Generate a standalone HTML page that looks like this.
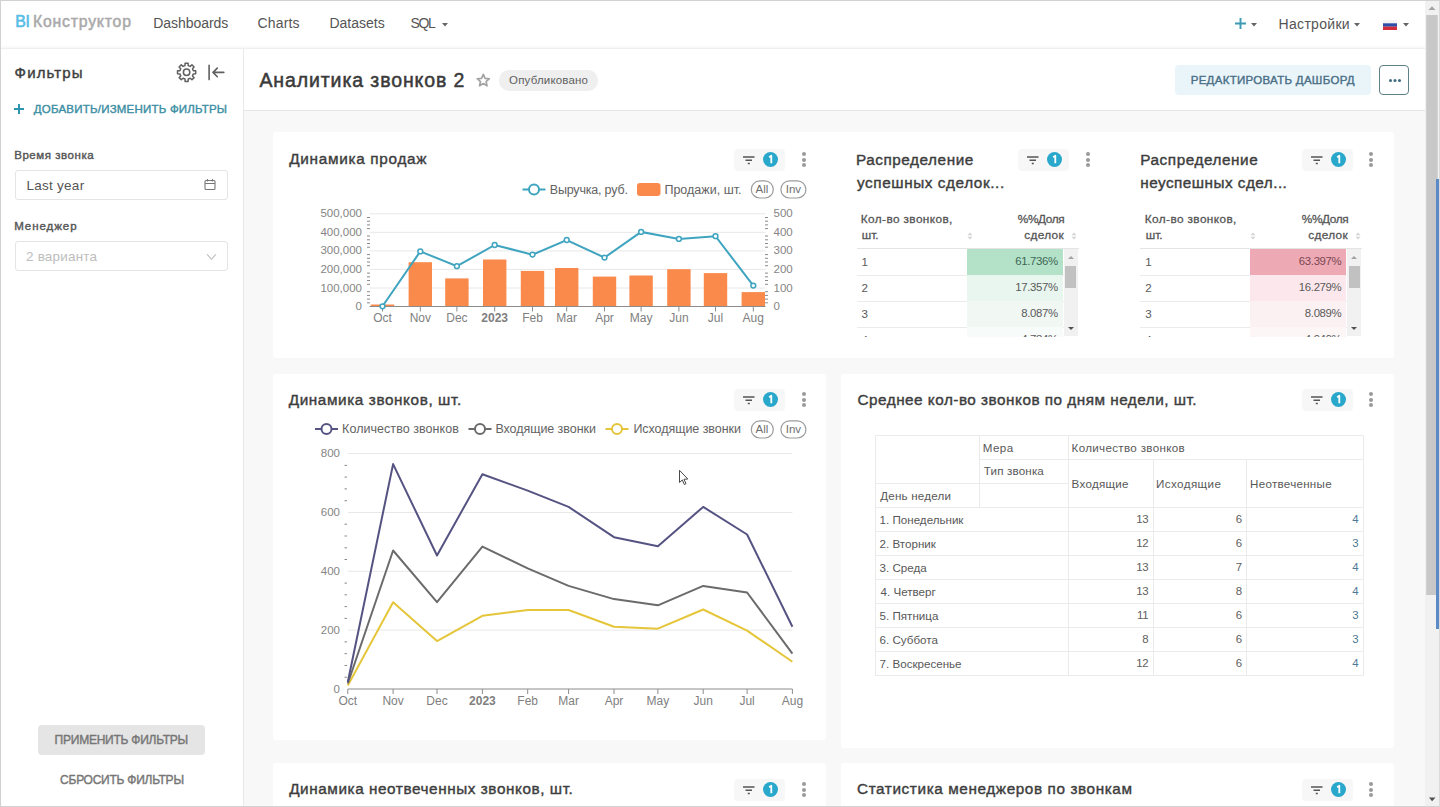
<!DOCTYPE html>
<html><head><meta charset="utf-8"><style>*{box-sizing:border-box;margin:0;padding:0}
html,body{width:1440px;height:807px;overflow:hidden;background:#fff;font-family:"Liberation Sans",sans-serif;color:#4a4a4a}
.a{position:absolute;white-space:nowrap}
.yl{font-size:11.5px;fill:#858585}
.xl{font-size:12px;fill:#808080}
.xl.b{font-weight:bold}
.lg{font-size:12.5px;fill:#636363}
.pl{font-size:11.5px;fill:#707070}
</style></head><body><div class="a" style="left:0px;top:0px;width:1425px;height:48px;background:#fff;"></div><div class="a" style="left:0px;top:45px;width:1425px;height:6px;background:linear-gradient(#fff,#f6f6f6 55%,#fafafa 80%,#fff);"></div><div class="a" style="left:0px;top:48px;width:1425px;height:1px;background:#efefef;"></div><div class="a" style="left:0px;top:49px;width:243px;height:758px;background:#fff;"></div><div class="a" style="left:243px;top:49px;width:1px;height:758px;background:#e9e9e9;"></div><div class="a" style="left:244px;top:49px;width:1181px;height:758px;background:#f8f8f8;"></div><div class="a" style="left:244px;top:49px;width:1181px;height:61px;background:#fff;"></div><div class="a" style="left:244px;top:110px;width:1181px;height:1px;background:#e6e6e6;"></div><div class="a" style="left:273px;top:132px;width:1121px;height:225.5px;background:#fff;border-radius:3px"></div><div class="a" style="left:273px;top:373.5px;width:553px;height:366.5px;background:#fff;border-radius:3px"></div><div class="a" style="left:841px;top:373.5px;width:553px;height:374.5px;background:#fff;border-radius:3px"></div><div class="a" style="left:273px;top:763px;width:553px;height:77px;background:#fff;border-radius:3px"></div><div class="a" style="left:841px;top:763px;width:553px;height:77px;background:#fff;border-radius:3px"></div><svg class="a" style="left:0;top:0" width="1440" height="807"><text x="362" y="310.0" text-anchor="end" class="yl">0</text><text x="773.5" y="310.0" class="yl">0</text><line x1="369.5" y1="288.0" x2="765.5" y2="288.0" stroke="#e8e8e8" stroke-width="1"/><text x="362" y="291.5" text-anchor="end" class="yl">100,000</text><text x="773.5" y="291.5" class="yl">100</text><line x1="369.5" y1="269.4" x2="765.5" y2="269.4" stroke="#e8e8e8" stroke-width="1"/><text x="362" y="272.9" text-anchor="end" class="yl">200,000</text><text x="773.5" y="272.9" class="yl">200</text><line x1="369.5" y1="250.9" x2="765.5" y2="250.9" stroke="#e8e8e8" stroke-width="1"/><text x="362" y="254.4" text-anchor="end" class="yl">300,000</text><text x="773.5" y="254.4" class="yl">300</text><line x1="369.5" y1="232.3" x2="765.5" y2="232.3" stroke="#e8e8e8" stroke-width="1"/><text x="362" y="235.8" text-anchor="end" class="yl">400,000</text><text x="773.5" y="235.8" class="yl">400</text><line x1="369.5" y1="213.8" x2="765.5" y2="213.8" stroke="#e8e8e8" stroke-width="1"/><text x="362" y="217.3" text-anchor="end" class="yl">500,000</text><text x="773.5" y="217.3" class="yl">500</text><line x1="367" y1="302.8" x2="370" y2="302.8" stroke="#8a8a8a" stroke-width="1"/><line x1="765" y1="302.8" x2="768" y2="302.8" stroke="#8a8a8a" stroke-width="1"/><line x1="367" y1="299.1" x2="370" y2="299.1" stroke="#8a8a8a" stroke-width="1"/><line x1="765" y1="299.1" x2="768" y2="299.1" stroke="#8a8a8a" stroke-width="1"/><line x1="367" y1="295.4" x2="370" y2="295.4" stroke="#8a8a8a" stroke-width="1"/><line x1="765" y1="295.4" x2="768" y2="295.4" stroke="#8a8a8a" stroke-width="1"/><line x1="367" y1="291.7" x2="370" y2="291.7" stroke="#8a8a8a" stroke-width="1"/><line x1="765" y1="291.7" x2="768" y2="291.7" stroke="#8a8a8a" stroke-width="1"/><line x1="367" y1="284.3" x2="370" y2="284.3" stroke="#8a8a8a" stroke-width="1"/><line x1="765" y1="284.3" x2="768" y2="284.3" stroke="#8a8a8a" stroke-width="1"/><line x1="367" y1="280.5" x2="370" y2="280.5" stroke="#8a8a8a" stroke-width="1"/><line x1="765" y1="280.5" x2="768" y2="280.5" stroke="#8a8a8a" stroke-width="1"/><line x1="367" y1="276.8" x2="370" y2="276.8" stroke="#8a8a8a" stroke-width="1"/><line x1="765" y1="276.8" x2="768" y2="276.8" stroke="#8a8a8a" stroke-width="1"/><line x1="367" y1="273.1" x2="370" y2="273.1" stroke="#8a8a8a" stroke-width="1"/><line x1="765" y1="273.1" x2="768" y2="273.1" stroke="#8a8a8a" stroke-width="1"/><line x1="367" y1="265.7" x2="370" y2="265.7" stroke="#8a8a8a" stroke-width="1"/><line x1="765" y1="265.7" x2="768" y2="265.7" stroke="#8a8a8a" stroke-width="1"/><line x1="367" y1="262.0" x2="370" y2="262.0" stroke="#8a8a8a" stroke-width="1"/><line x1="765" y1="262.0" x2="768" y2="262.0" stroke="#8a8a8a" stroke-width="1"/><line x1="367" y1="258.3" x2="370" y2="258.3" stroke="#8a8a8a" stroke-width="1"/><line x1="765" y1="258.3" x2="768" y2="258.3" stroke="#8a8a8a" stroke-width="1"/><line x1="367" y1="254.6" x2="370" y2="254.6" stroke="#8a8a8a" stroke-width="1"/><line x1="765" y1="254.6" x2="768" y2="254.6" stroke="#8a8a8a" stroke-width="1"/><line x1="367" y1="247.2" x2="370" y2="247.2" stroke="#8a8a8a" stroke-width="1"/><line x1="765" y1="247.2" x2="768" y2="247.2" stroke="#8a8a8a" stroke-width="1"/><line x1="367" y1="243.5" x2="370" y2="243.5" stroke="#8a8a8a" stroke-width="1"/><line x1="765" y1="243.5" x2="768" y2="243.5" stroke="#8a8a8a" stroke-width="1"/><line x1="367" y1="239.8" x2="370" y2="239.8" stroke="#8a8a8a" stroke-width="1"/><line x1="765" y1="239.8" x2="768" y2="239.8" stroke="#8a8a8a" stroke-width="1"/><line x1="367" y1="236.0" x2="370" y2="236.0" stroke="#8a8a8a" stroke-width="1"/><line x1="765" y1="236.0" x2="768" y2="236.0" stroke="#8a8a8a" stroke-width="1"/><line x1="367" y1="228.6" x2="370" y2="228.6" stroke="#8a8a8a" stroke-width="1"/><line x1="765" y1="228.6" x2="768" y2="228.6" stroke="#8a8a8a" stroke-width="1"/><line x1="367" y1="224.9" x2="370" y2="224.9" stroke="#8a8a8a" stroke-width="1"/><line x1="765" y1="224.9" x2="768" y2="224.9" stroke="#8a8a8a" stroke-width="1"/><line x1="367" y1="221.2" x2="370" y2="221.2" stroke="#8a8a8a" stroke-width="1"/><line x1="765" y1="221.2" x2="768" y2="221.2" stroke="#8a8a8a" stroke-width="1"/><line x1="367" y1="217.5" x2="370" y2="217.5" stroke="#8a8a8a" stroke-width="1"/><line x1="765" y1="217.5" x2="768" y2="217.5" stroke="#8a8a8a" stroke-width="1"/><rect x="370.8" y="304.5" width="23.4" height="2.0" fill="#fa8a4b"/><rect x="408.6" y="262.2" width="23.4" height="44.3" fill="#fa8a4b"/><rect x="445.2" y="278.4" width="23.4" height="28.1" fill="#fa8a4b"/><rect x="483.0" y="259.5" width="23.4" height="47.0" fill="#fa8a4b"/><rect x="520.8" y="270.9" width="23.4" height="35.6" fill="#fa8a4b"/><rect x="555.0" y="268" width="23.4" height="38.5" fill="#fa8a4b"/><rect x="592.8" y="276.6" width="23.4" height="29.9" fill="#fa8a4b"/><rect x="629.4" y="275.5" width="23.4" height="31.0" fill="#fa8a4b"/><rect x="667.2" y="269.2" width="23.4" height="37.3" fill="#fa8a4b"/><rect x="703.8" y="273.1" width="23.4" height="33.4" fill="#fa8a4b"/><rect x="741.6" y="292.1" width="23.4" height="14.4" fill="#fa8a4b"/><line x1="369.5" y1="306.5" x2="765.5" y2="306.5" stroke="#8c8c8c" stroke-width="1"/><line x1="382.5" y1="306.5" x2="382.5" y2="311.5" stroke="#8c8c8c" stroke-width="1"/><text x="382.5" y="322" text-anchor="middle" class="xl">Oct</text><line x1="420.3" y1="306.5" x2="420.3" y2="311.5" stroke="#8c8c8c" stroke-width="1"/><text x="420.3" y="322" text-anchor="middle" class="xl">Nov</text><line x1="456.9" y1="306.5" x2="456.9" y2="311.5" stroke="#8c8c8c" stroke-width="1"/><text x="456.9" y="322" text-anchor="middle" class="xl">Dec</text><line x1="494.7" y1="306.5" x2="494.7" y2="311.5" stroke="#8c8c8c" stroke-width="1"/><text x="494.7" y="322" text-anchor="middle" class="xl b">2023</text><line x1="532.5" y1="306.5" x2="532.5" y2="311.5" stroke="#8c8c8c" stroke-width="1"/><text x="532.5" y="322" text-anchor="middle" class="xl">Feb</text><line x1="566.7" y1="306.5" x2="566.7" y2="311.5" stroke="#8c8c8c" stroke-width="1"/><text x="566.7" y="322" text-anchor="middle" class="xl">Mar</text><line x1="604.5" y1="306.5" x2="604.5" y2="311.5" stroke="#8c8c8c" stroke-width="1"/><text x="604.5" y="322" text-anchor="middle" class="xl">Apr</text><line x1="641.1" y1="306.5" x2="641.1" y2="311.5" stroke="#8c8c8c" stroke-width="1"/><text x="641.1" y="322" text-anchor="middle" class="xl">May</text><line x1="678.9" y1="306.5" x2="678.9" y2="311.5" stroke="#8c8c8c" stroke-width="1"/><text x="678.9" y="322" text-anchor="middle" class="xl">Jun</text><line x1="715.5" y1="306.5" x2="715.5" y2="311.5" stroke="#8c8c8c" stroke-width="1"/><text x="715.5" y="322" text-anchor="middle" class="xl">Jul</text><line x1="753.3" y1="306.5" x2="753.3" y2="311.5" stroke="#8c8c8c" stroke-width="1"/><text x="753.3" y="322" text-anchor="middle" class="xl">Aug</text><polyline points="382.5,306.3 420.3,251.4 456.9,266.2 494.7,245 532.5,254.6 566.7,240 604.5,257.6 641.1,231.9 678.9,238.9 715.5,236.2 753.3,285.6" fill="none" stroke="#3ea4bf" stroke-width="2"/><circle cx="382.5" cy="306.3" r="2.4" fill="#fff" stroke="#3ea4bf" stroke-width="1.5"/><circle cx="420.3" cy="251.4" r="2.4" fill="#fff" stroke="#3ea4bf" stroke-width="1.5"/><circle cx="456.9" cy="266.2" r="2.4" fill="#fff" stroke="#3ea4bf" stroke-width="1.5"/><circle cx="494.7" cy="245" r="2.4" fill="#fff" stroke="#3ea4bf" stroke-width="1.5"/><circle cx="532.5" cy="254.6" r="2.4" fill="#fff" stroke="#3ea4bf" stroke-width="1.5"/><circle cx="566.7" cy="240" r="2.4" fill="#fff" stroke="#3ea4bf" stroke-width="1.5"/><circle cx="604.5" cy="257.6" r="2.4" fill="#fff" stroke="#3ea4bf" stroke-width="1.5"/><circle cx="641.1" cy="231.9" r="2.4" fill="#fff" stroke="#3ea4bf" stroke-width="1.5"/><circle cx="678.9" cy="238.9" r="2.4" fill="#fff" stroke="#3ea4bf" stroke-width="1.5"/><circle cx="715.5" cy="236.2" r="2.4" fill="#fff" stroke="#3ea4bf" stroke-width="1.5"/><circle cx="753.3" cy="285.6" r="2.4" fill="#fff" stroke="#3ea4bf" stroke-width="1.5"/><line x1="522.5" y1="189.5" x2="545.5" y2="189.5" stroke="#3ea4bf" stroke-width="2"/><circle cx="534" cy="189.5" r="5" fill="#fff" stroke="#3ea4bf" stroke-width="2"/><rect x="637" y="183" width="23.5" height="13" rx="3" fill="#fa8a4b"/><rect x="751.3" y="180.8" width="22" height="17.2" rx="8.6" fill="none" stroke="#9c9c9c" stroke-width="1.2"/><text x="762" y="193" text-anchor="middle" class="pl">All</text><rect x="780.9" y="180.8" width="25" height="17.2" rx="8.6" fill="none" stroke="#9c9c9c" stroke-width="1.2"/><text x="793.4" y="193" text-anchor="middle" class="pl">Inv</text></svg><svg class="a" style="left:0;top:0" width="1440" height="807"><text x="340" y="692.5" text-anchor="end" class="yl">0</text><line x1="347.8" y1="630.1" x2="792.4" y2="630.1" stroke="#e8e8e8" stroke-width="1"/><text x="340" y="633.6" text-anchor="end" class="yl">200</text><line x1="347.8" y1="571.3" x2="792.4" y2="571.3" stroke="#e8e8e8" stroke-width="1"/><text x="340" y="574.8" text-anchor="end" class="yl">400</text><line x1="347.8" y1="512.5" x2="792.4" y2="512.5" stroke="#e8e8e8" stroke-width="1"/><text x="340" y="516.0" text-anchor="end" class="yl">600</text><line x1="347.8" y1="453.6" x2="792.4" y2="453.6" stroke="#e8e8e8" stroke-width="1"/><text x="340" y="457.1" text-anchor="end" class="yl">800</text><line x1="344.5" y1="677.2" x2="347" y2="677.2" stroke="#8a8a8a" stroke-width="1"/><line x1="344.5" y1="665.5" x2="347" y2="665.5" stroke="#8a8a8a" stroke-width="1"/><line x1="344.5" y1="653.7" x2="347" y2="653.7" stroke="#8a8a8a" stroke-width="1"/><line x1="344.5" y1="641.9" x2="347" y2="641.9" stroke="#8a8a8a" stroke-width="1"/><line x1="344.5" y1="618.4" x2="347" y2="618.4" stroke="#8a8a8a" stroke-width="1"/><line x1="344.5" y1="606.6" x2="347" y2="606.6" stroke="#8a8a8a" stroke-width="1"/><line x1="344.5" y1="594.8" x2="347" y2="594.8" stroke="#8a8a8a" stroke-width="1"/><line x1="344.5" y1="583.1" x2="347" y2="583.1" stroke="#8a8a8a" stroke-width="1"/><line x1="344.5" y1="559.5" x2="347" y2="559.5" stroke="#8a8a8a" stroke-width="1"/><line x1="344.5" y1="547.8" x2="347" y2="547.8" stroke="#8a8a8a" stroke-width="1"/><line x1="344.5" y1="536.0" x2="347" y2="536.0" stroke="#8a8a8a" stroke-width="1"/><line x1="344.5" y1="524.2" x2="347" y2="524.2" stroke="#8a8a8a" stroke-width="1"/><line x1="344.5" y1="500.7" x2="347" y2="500.7" stroke="#8a8a8a" stroke-width="1"/><line x1="344.5" y1="488.9" x2="347" y2="488.9" stroke="#8a8a8a" stroke-width="1"/><line x1="344.5" y1="477.1" x2="347" y2="477.1" stroke="#8a8a8a" stroke-width="1"/><line x1="344.5" y1="465.4" x2="347" y2="465.4" stroke="#8a8a8a" stroke-width="1"/><line x1="347.8" y1="689" x2="792.4" y2="689" stroke="#8c8c8c" stroke-width="1"/><line x1="347.8" y1="689" x2="347.8" y2="694" stroke="#8c8c8c" stroke-width="1"/><text x="347.8" y="705" text-anchor="middle" class="xl">Oct</text><line x1="393.1" y1="689" x2="393.1" y2="694" stroke="#8c8c8c" stroke-width="1"/><text x="393.1" y="705" text-anchor="middle" class="xl">Nov</text><line x1="437.0" y1="689" x2="437.0" y2="694" stroke="#8c8c8c" stroke-width="1"/><text x="437.0" y="705" text-anchor="middle" class="xl">Dec</text><line x1="482.4" y1="689" x2="482.4" y2="694" stroke="#8c8c8c" stroke-width="1"/><text x="482.4" y="705" text-anchor="middle" class="xl b">2023</text><line x1="527.7" y1="689" x2="527.7" y2="694" stroke="#8c8c8c" stroke-width="1"/><text x="527.7" y="705" text-anchor="middle" class="xl">Feb</text><line x1="568.6" y1="689" x2="568.6" y2="694" stroke="#8c8c8c" stroke-width="1"/><text x="568.6" y="705" text-anchor="middle" class="xl">Mar</text><line x1="614.0" y1="689" x2="614.0" y2="694" stroke="#8c8c8c" stroke-width="1"/><text x="614.0" y="705" text-anchor="middle" class="xl">Apr</text><line x1="657.9" y1="689" x2="657.9" y2="694" stroke="#8c8c8c" stroke-width="1"/><text x="657.9" y="705" text-anchor="middle" class="xl">May</text><line x1="703.2" y1="689" x2="703.2" y2="694" stroke="#8c8c8c" stroke-width="1"/><text x="703.2" y="705" text-anchor="middle" class="xl">Jun</text><line x1="747.1" y1="689" x2="747.1" y2="694" stroke="#8c8c8c" stroke-width="1"/><text x="747.1" y="705" text-anchor="middle" class="xl">Jul</text><line x1="792.4" y1="689" x2="792.4" y2="694" stroke="#8c8c8c" stroke-width="1"/><text x="792.4" y="705" text-anchor="middle" class="xl">Aug</text><polyline points="347.8,685.5 393.1,602.2 437.0,641.1 482.4,615.8 527.7,610 568.6,610 614.0,626.7 657.9,628.7 703.2,609.5 747.1,630.6 792.4,661.7" fill="none" stroke="#e5c63a" stroke-width="2" stroke-linejoin="round"/><polyline points="347.8,683.5 393.1,550.5 437.0,602.2 482.4,546.6 527.7,568.4 568.6,585.9 614.0,599.1 657.9,605.3 703.2,585.9 747.1,592.5 792.4,653.6" fill="none" stroke="#6b6b6b" stroke-width="2" stroke-linejoin="round"/><polyline points="347.8,682 393.1,464.1 437.0,555.5 482.4,474.2 527.7,490.6 568.6,506.9 614.0,537.2 657.9,546.2 703.2,506.9 747.1,534.5 792.4,626.7" fill="none" stroke="#555382" stroke-width="2" stroke-linejoin="round"/><line x1="315" y1="429" x2="338" y2="429" stroke="#555382" stroke-width="2"/><circle cx="326.5" cy="429" r="5" fill="#fff" stroke="#555382" stroke-width="2"/><line x1="468.5" y1="429" x2="491.5" y2="429" stroke="#6b6b6b" stroke-width="2"/><circle cx="480.0" cy="429" r="5" fill="#fff" stroke="#6b6b6b" stroke-width="2"/><line x1="605.5" y1="429" x2="628.5" y2="429" stroke="#e5c63a" stroke-width="2"/><circle cx="617.0" cy="429" r="5" fill="#fff" stroke="#e5c63a" stroke-width="2"/><rect x="751.3" y="420.8" width="22" height="17.2" rx="8.6" fill="none" stroke="#9c9c9c" stroke-width="1.2"/><text x="762" y="433" text-anchor="middle" class="pl">All</text><rect x="780.9" y="420.8" width="25" height="17.2" rx="8.6" fill="none" stroke="#9c9c9c" stroke-width="1.2"/><text x="793.4" y="433" text-anchor="middle" class="pl">Inv</text><path d="M679.5 470.3 L679.5 482.5 L682.3 479.9 L684.3 484.5 L686 483.7 L684 479.3 L687.8 479 Z" fill="#fff" stroke="#4a4a4a" stroke-width="1" stroke-linejoin="round"/></svg><div class="a" style="left:856.5px;top:205px;width:230px;height:131.5px;overflow:hidden"><svg class="a" style="left:110.0px;top:27px" width="6" height="8" viewBox="0 0 6 8"><path d="M0.5 3.2L3 0.6 5.5 3.2z M0.5 4.8L3 7.4 5.5 4.8z" fill="#d4d4d4"/></svg><svg class="a" style="left:214.5px;top:27px" width="6" height="8" viewBox="0 0 6 8"><path d="M0.5 3.2L3 0.6 5.5 3.2z M0.5 4.8L3 7.4 5.5 4.8z" fill="#d4d4d4"/></svg><div class="a" style="left:0.00px;top:42.50px;width:222px;height:1.5px;background:#e4e4e4"></div><div class="a" style="left:110.30px;top:43.50px;width:96px;height:26.5px;background:#b3e2c9"></div><div class="a" style="left:5.0px;top:49.5px;font-size:11.6px;line-height:13px;color:#5a5a5a">1</div><div class="a" style="left:110.30px;top:49.5px;width:90.9px;text-align:right;font-size:11.4px;letter-spacing:-0.35px;line-height:13px;color:#3f6753">61.736%</div><div class="a" style="left:0.00px;top:69.50px;width:207px;height:1px;background:#ebebeb"></div><div class="a" style="left:110.30px;top:70.00px;width:96px;height:26px;background:#e9f6ef"></div><div class="a" style="left:5.0px;top:75.5px;font-size:11.6px;line-height:13px;color:#5a5a5a">2</div><div class="a" style="left:110.30px;top:75.5px;width:90.9px;text-align:right;font-size:11.4px;letter-spacing:-0.35px;line-height:13px;color:#5a5a5a">17.357%</div><div class="a" style="left:0.00px;top:95.50px;width:207px;height:1px;background:#ebebeb"></div><div class="a" style="left:110.30px;top:96.00px;width:96px;height:26px;background:#f1f8f4"></div><div class="a" style="left:5.0px;top:101.5px;font-size:11.6px;line-height:13px;color:#5a5a5a">3</div><div class="a" style="left:110.30px;top:101.5px;width:90.9px;text-align:right;font-size:11.4px;letter-spacing:-0.35px;line-height:13px;color:#5a5a5a">8.087%</div><div class="a" style="left:0.00px;top:121.50px;width:207px;height:1px;background:#ebebeb"></div><div class="a" style="left:110.30px;top:122.00px;width:96px;height:26px;background:#f7fbf9"></div><div class="a" style="left:5.0px;top:127.5px;font-size:11.6px;line-height:13px;color:#5a5a5a">4</div><div class="a" style="left:110.30px;top:127.5px;width:90.9px;text-align:right;font-size:11.4px;letter-spacing:-0.35px;line-height:13px;color:#5a5a5a">4.784%</div><div class="a" style="left:0.00px;top:147.50px;width:207px;height:1px;background:#ebebeb"></div><div class="a" style="left:207.00px;top:44.00px;width:14px;height:87px;background:#f1f1f1"></div><div class="a" style="left:208.50px;top:61.00px;width:11px;height:22px;background:#c1c1c1"></div><svg class="a" style="left:208.0px;top:48px" width="12" height="78" viewBox="0 0 12 78"><path d="M3 6L6 3 9 6z" fill="#a3a3a3"/><path d="M3 74L6 77 9 74z" fill="#505050"/></svg></div><div class="a" style="left:1140.2px;top:205px;width:230px;height:131.5px;overflow:hidden"><svg class="a" style="left:110.0px;top:27px" width="6" height="8" viewBox="0 0 6 8"><path d="M0.5 3.2L3 0.6 5.5 3.2z M0.5 4.8L3 7.4 5.5 4.8z" fill="#d4d4d4"/></svg><svg class="a" style="left:214.5px;top:27px" width="6" height="8" viewBox="0 0 6 8"><path d="M0.5 3.2L3 0.6 5.5 3.2z M0.5 4.8L3 7.4 5.5 4.8z" fill="#d4d4d4"/></svg><div class="a" style="left:0.00px;top:42.50px;width:222px;height:1.5px;background:#e4e4e4"></div><div class="a" style="left:110.30px;top:43.50px;width:96px;height:26.5px;background:#eeaab4"></div><div class="a" style="left:5.0px;top:49.5px;font-size:11.6px;line-height:13px;color:#5a5a5a">1</div><div class="a" style="left:110.30px;top:49.5px;width:90.9px;text-align:right;font-size:11.4px;letter-spacing:-0.35px;line-height:13px;color:#7a4753">63.397%</div><div class="a" style="left:0.00px;top:69.50px;width:207px;height:1px;background:#ebebeb"></div><div class="a" style="left:110.30px;top:70.00px;width:96px;height:26px;background:#fce8ec"></div><div class="a" style="left:5.0px;top:75.5px;font-size:11.6px;line-height:13px;color:#5a5a5a">2</div><div class="a" style="left:110.30px;top:75.5px;width:90.9px;text-align:right;font-size:11.4px;letter-spacing:-0.35px;line-height:13px;color:#5a5a5a">16.279%</div><div class="a" style="left:0.00px;top:95.50px;width:207px;height:1px;background:#ebebeb"></div><div class="a" style="left:110.30px;top:96.00px;width:96px;height:26px;background:#fbf1f3"></div><div class="a" style="left:5.0px;top:101.5px;font-size:11.6px;line-height:13px;color:#5a5a5a">3</div><div class="a" style="left:110.30px;top:101.5px;width:90.9px;text-align:right;font-size:11.4px;letter-spacing:-0.35px;line-height:13px;color:#5a5a5a">8.089%</div><div class="a" style="left:0.00px;top:121.50px;width:207px;height:1px;background:#ebebeb"></div><div class="a" style="left:110.30px;top:122.00px;width:96px;height:26px;background:#fcf6f7"></div><div class="a" style="left:5.0px;top:127.5px;font-size:11.6px;line-height:13px;color:#5a5a5a">4</div><div class="a" style="left:110.30px;top:127.5px;width:90.9px;text-align:right;font-size:11.4px;letter-spacing:-0.35px;line-height:13px;color:#5a5a5a">4.940%</div><div class="a" style="left:0.00px;top:147.50px;width:207px;height:1px;background:#ebebeb"></div><div class="a" style="left:207.00px;top:44.00px;width:14px;height:87px;background:#f1f1f1"></div><div class="a" style="left:208.50px;top:61.00px;width:11px;height:22px;background:#c1c1c1"></div><svg class="a" style="left:208.0px;top:48px" width="12" height="78" viewBox="0 0 12 78"><path d="M3 6L6 3 9 6z" fill="#a3a3a3"/><path d="M3 74L6 77 9 74z" fill="#505050"/></svg></div><svg class="a" style="left:0;top:0" width="1440" height="807"><line x1="875.5" y1="435.5" x2="1363.5" y2="435.5" stroke="#ebebeb" stroke-width="1"/><line x1="875.5" y1="675.5" x2="1363.5" y2="675.5" stroke="#ebebeb" stroke-width="1"/><line x1="875.5" y1="435.5" x2="875.5" y2="675.5" stroke="#ebebeb" stroke-width="1"/><line x1="1363.5" y1="435.5" x2="1363.5" y2="675.5" stroke="#ebebeb" stroke-width="1"/><line x1="979.5" y1="435.5" x2="979.5" y2="507.5" stroke="#ebebeb" stroke-width="1"/><line x1="1068.5" y1="435.5" x2="1068.5" y2="675.5" stroke="#ebebeb" stroke-width="1"/><line x1="1153.5" y1="459.5" x2="1153.5" y2="675.5" stroke="#ebebeb" stroke-width="1"/><line x1="1246.5" y1="459.5" x2="1246.5" y2="675.5" stroke="#ebebeb" stroke-width="1"/><line x1="979.5" y1="459.5" x2="1363.5" y2="459.5" stroke="#ebebeb" stroke-width="1"/><line x1="875.5" y1="483.5" x2="1068.5" y2="483.5" stroke="#ebebeb" stroke-width="1"/><line x1="875.5" y1="507.5" x2="1363.5" y2="507.5" stroke="#ebebeb" stroke-width="1"/><line x1="875.5" y1="531.5" x2="1363.5" y2="531.5" stroke="#ebebeb" stroke-width="1"/><line x1="875.5" y1="555.5" x2="1363.5" y2="555.5" stroke="#ebebeb" stroke-width="1"/><line x1="875.5" y1="579.5" x2="1363.5" y2="579.5" stroke="#ebebeb" stroke-width="1"/><line x1="875.5" y1="603.5" x2="1363.5" y2="603.5" stroke="#ebebeb" stroke-width="1"/><line x1="875.5" y1="627.5" x2="1363.5" y2="627.5" stroke="#ebebeb" stroke-width="1"/><line x1="875.5" y1="651.5" x2="1363.5" y2="651.5" stroke="#ebebeb" stroke-width="1"/><text x="1148.5" y="523.1" text-anchor="end" style="font-size:11.4px;fill:#606060;letter-spacing:-0.2px">13</text><text x="1242" y="523.1" text-anchor="end" style="font-size:11.4px;fill:#606060">6</text><text x="1358.5" y="523.1" text-anchor="end" style="font-size:11.4px;fill:#4d7896">4</text><text x="1148.5" y="547.1" text-anchor="end" style="font-size:11.4px;fill:#606060;letter-spacing:-0.2px">12</text><text x="1242" y="547.1" text-anchor="end" style="font-size:11.4px;fill:#606060">6</text><text x="1358.5" y="547.1" text-anchor="end" style="font-size:11.4px;fill:#4d7896">3</text><text x="1148.5" y="571.1" text-anchor="end" style="font-size:11.4px;fill:#606060;letter-spacing:-0.2px">13</text><text x="1242" y="571.1" text-anchor="end" style="font-size:11.4px;fill:#606060">7</text><text x="1358.5" y="571.1" text-anchor="end" style="font-size:11.4px;fill:#4d7896">4</text><text x="1148.5" y="595.1" text-anchor="end" style="font-size:11.4px;fill:#606060;letter-spacing:-0.2px">13</text><text x="1242" y="595.1" text-anchor="end" style="font-size:11.4px;fill:#606060">8</text><text x="1358.5" y="595.1" text-anchor="end" style="font-size:11.4px;fill:#4d7896">4</text><text x="1148.5" y="619.1" text-anchor="end" style="font-size:11.4px;fill:#606060;letter-spacing:-0.2px">11</text><text x="1242" y="619.1" text-anchor="end" style="font-size:11.4px;fill:#606060">6</text><text x="1358.5" y="619.1" text-anchor="end" style="font-size:11.4px;fill:#4d7896">3</text><text x="1148.5" y="643.1" text-anchor="end" style="font-size:11.4px;fill:#606060;letter-spacing:-0.2px">8</text><text x="1242" y="643.1" text-anchor="end" style="font-size:11.4px;fill:#606060">6</text><text x="1358.5" y="643.1" text-anchor="end" style="font-size:11.4px;fill:#4d7896">3</text><text x="1148.5" y="667.1" text-anchor="end" style="font-size:11.4px;fill:#606060;letter-spacing:-0.2px">12</text><text x="1242" y="667.1" text-anchor="end" style="font-size:11.4px;fill:#606060">6</text><text x="1358.5" y="667.1" text-anchor="end" style="font-size:11.4px;fill:#4d7896">4</text></svg><svg class="a" style="left:441.5px;top:22.5px" width="6" height="4" viewBox="0 0 6 4"><path d="M0 0h6L3 3.6z" fill="#666"/></svg><svg class="a" style="left:1234.5px;top:18px" width="11" height="11" viewBox="0 0 11 11"><path d="M5.5 0v11M0 5.5h11" stroke="#3c9ab4" stroke-width="1.9"/></svg><svg class="a" style="left:1250.5px;top:22.5px" width="6" height="4" viewBox="0 0 6 4"><path d="M0 0h6L3 3.6z" fill="#666"/></svg><svg class="a" style="left:1354px;top:22.5px" width="6" height="4" viewBox="0 0 6 4"><path d="M0 0h6L3 3.6z" fill="#666"/></svg><svg class="a" style="left:1383px;top:20px" width="14" height="10" viewBox="0 0 14 10"><rect width="14" height="3.4" fill="#f4f4f4"/><rect y="3.3" width="14" height="3.4" fill="#2c4ea8"/><rect y="6.6" width="14" height="3.4" fill="#d22b3a"/></svg><svg class="a" style="left:1402.5px;top:22.5px" width="6" height="4" viewBox="0 0 6 4"><path d="M0 0h6L3 3.6z" fill="#666"/></svg><svg class="a" style="left:0;top:0" width="240" height="100"><path d="M193.31 70.69 L195.68 70.79 L195.68 73.81 L193.31 73.91 L192.48 75.91 L194.09 77.65 L191.95 79.79 L190.21 78.18 L188.21 79.01 L188.11 81.38 L185.09 81.38 L184.99 79.01 L182.99 78.18 L181.25 79.79 L179.11 77.65 L180.72 75.91 L179.89 73.91 L177.52 73.81 L177.52 70.79 L179.89 70.69 L180.72 68.69 L179.11 66.95 L181.25 64.81 L182.99 66.42 L184.99 65.59 L185.09 63.22 L188.11 63.22 L188.21 65.59 L190.21 66.42 L191.95 64.81 L194.09 66.95 L192.48 68.69Z" fill="none" stroke="#606060" stroke-width="1.5" stroke-linejoin="round"/><circle cx="186.6" cy="72.3" r="3.2" fill="none" stroke="#606060" stroke-width="1.5"/><path d="M209.1 65.3v14.3M213 72.4h10.8M217.3 68.1l-4.3 4.3 4.3 4.3" fill="none" stroke="#606060" stroke-width="1.6" stroke-linecap="round" stroke-linejoin="round"/></svg><svg class="a" style="left:14px;top:103.5px" width="10" height="10" viewBox="0 0 10 10"><path d="M5 0v10M0 5h10" stroke="#2d95b0" stroke-width="2"/></svg><div class="a" style="left:15px;top:170px;width:213px;height:30px;border:1px solid #e4e4e4;border-radius:3px"></div><svg class="a" style="left:204px;top:179px" width="12" height="11" viewBox="0 0 12 11" fill="none" stroke="#777" stroke-width="1.1"><rect x="1" y="1.5" width="10" height="9" rx="1"/><path d="M1 4.5h10M3.5 0v2.5M8.5 0v2.5"/></svg><div class="a" style="left:15px;top:241px;width:213px;height:30px;border:1px solid #e4e4e4;border-radius:3px"></div><svg class="a" style="left:206px;top:253.2px" width="11" height="7.5" viewBox="0 0 11 7" fill="none" stroke="#bbb" stroke-width="1.1"><path d="M1 1l4.5 5L10 1"/></svg><div class="a" style="left:38px;top:725px;width:167px;height:30px;background:#e5e5e5;border-radius:4px"></div><svg class="a" style="left:476.2px;top:72.6px" width="14.6" height="14.2" viewBox="0 0 24 23" fill="none" stroke="#a2a2a2" stroke-width="2.7" stroke-linejoin="round"><path d="M12 2l2.9 6.6 7.1.6-5.4 4.7 1.6 7-6.2-3.7-6.2 3.7 1.6-7L2 9.2l7.1-.6z"/></svg><div class="a" style="left:498.5px;top:70px;width:99.5px;height:20.6px;background:#efefef;border-radius:10px"></div><div class="a" style="left:1175px;top:65px;width:196px;height:30px;background:#eaf5fa;border-radius:4px"></div><div class="a" style="left:1379px;top:65px;width:30px;height:30px;border:1px solid #5e8088;border-radius:4px"></div><div class="a" style="left:1388.5px;top:78.5px;width:3px;height:3px;border-radius:50%;background:#3e6b80;box-shadow:4.5px 0 #3e6b80,9px 0 #3e6b80"></div><div class="a" style="left:734px;top:148.5px;width:51px;height:22.5px;background:#f7f7f7;border-radius:4px"></div><svg class="a" style="left:742px;top:155.5px" width="14" height="9" viewBox="0 0 14 9"><path d="M1 1h11.5M3.5 4.3h6.5M5.8 7.6h2" stroke="#555" stroke-width="1.5"/></svg><div class="a" style="left:762.5px;top:152.0px;width:15px;height:15px;border-radius:50%;background:#2aa8cc"></div><svg class="a" style="left:762.5px;top:152.0px" width="15" height="15" viewBox="0 0 15 15"><path d="M6.2 5.2L8.3 3.8V11.2" fill="none" stroke="#fff" stroke-width="1.8" stroke-linejoin="round"/></svg><div class="a" style="left:801.5px;top:151.7px;width:4px;height:4px;border-radius:50%;background:#9a9a9a"></div><div class="a" style="left:801.5px;top:157.5px;width:4px;height:4px;border-radius:50%;background:#9a9a9a"></div><div class="a" style="left:801.5px;top:162.9px;width:4px;height:4px;border-radius:50%;background:#9a9a9a"></div><div class="a" style="left:1018px;top:148.5px;width:51px;height:22.5px;background:#f7f7f7;border-radius:4px"></div><svg class="a" style="left:1026px;top:155.5px" width="14" height="9" viewBox="0 0 14 9"><path d="M1 1h11.5M3.5 4.3h6.5M5.8 7.6h2" stroke="#555" stroke-width="1.5"/></svg><div class="a" style="left:1046.5px;top:152.0px;width:15px;height:15px;border-radius:50%;background:#2aa8cc"></div><svg class="a" style="left:1046.5px;top:152.0px" width="15" height="15" viewBox="0 0 15 15"><path d="M6.2 5.2L8.3 3.8V11.2" fill="none" stroke="#fff" stroke-width="1.8" stroke-linejoin="round"/></svg><div class="a" style="left:1085.5px;top:151.7px;width:4px;height:4px;border-radius:50%;background:#9a9a9a"></div><div class="a" style="left:1085.5px;top:157.5px;width:4px;height:4px;border-radius:50%;background:#9a9a9a"></div><div class="a" style="left:1085.5px;top:162.9px;width:4px;height:4px;border-radius:50%;background:#9a9a9a"></div><div class="a" style="left:1302px;top:148.5px;width:51px;height:22.5px;background:#f7f7f7;border-radius:4px"></div><svg class="a" style="left:1310px;top:155.5px" width="14" height="9" viewBox="0 0 14 9"><path d="M1 1h11.5M3.5 4.3h6.5M5.8 7.6h2" stroke="#555" stroke-width="1.5"/></svg><div class="a" style="left:1330.5px;top:152.0px;width:15px;height:15px;border-radius:50%;background:#2aa8cc"></div><svg class="a" style="left:1330.5px;top:152.0px" width="15" height="15" viewBox="0 0 15 15"><path d="M6.2 5.2L8.3 3.8V11.2" fill="none" stroke="#fff" stroke-width="1.8" stroke-linejoin="round"/></svg><div class="a" style="left:1369.2px;top:151.7px;width:4px;height:4px;border-radius:50%;background:#9a9a9a"></div><div class="a" style="left:1369.2px;top:157.5px;width:4px;height:4px;border-radius:50%;background:#9a9a9a"></div><div class="a" style="left:1369.2px;top:162.9px;width:4px;height:4px;border-radius:50%;background:#9a9a9a"></div><div class="a" style="left:734px;top:388.5px;width:51px;height:22.5px;background:#f7f7f7;border-radius:4px"></div><svg class="a" style="left:742px;top:395.5px" width="14" height="9" viewBox="0 0 14 9"><path d="M1 1h11.5M3.5 4.3h6.5M5.8 7.6h2" stroke="#555" stroke-width="1.5"/></svg><div class="a" style="left:762.5px;top:392.0px;width:15px;height:15px;border-radius:50%;background:#2aa8cc"></div><svg class="a" style="left:762.5px;top:392.0px" width="15" height="15" viewBox="0 0 15 15"><path d="M6.2 5.2L8.3 3.8V11.2" fill="none" stroke="#fff" stroke-width="1.8" stroke-linejoin="round"/></svg><div class="a" style="left:801.5px;top:391.7px;width:4px;height:4px;border-radius:50%;background:#9a9a9a"></div><div class="a" style="left:801.5px;top:397.5px;width:4px;height:4px;border-radius:50%;background:#9a9a9a"></div><div class="a" style="left:801.5px;top:402.9px;width:4px;height:4px;border-radius:50%;background:#9a9a9a"></div><div class="a" style="left:1302px;top:388.5px;width:51px;height:22.5px;background:#f7f7f7;border-radius:4px"></div><svg class="a" style="left:1310px;top:395.5px" width="14" height="9" viewBox="0 0 14 9"><path d="M1 1h11.5M3.5 4.3h6.5M5.8 7.6h2" stroke="#555" stroke-width="1.5"/></svg><div class="a" style="left:1330.5px;top:392.0px;width:15px;height:15px;border-radius:50%;background:#2aa8cc"></div><svg class="a" style="left:1330.5px;top:392.0px" width="15" height="15" viewBox="0 0 15 15"><path d="M6.2 5.2L8.3 3.8V11.2" fill="none" stroke="#fff" stroke-width="1.8" stroke-linejoin="round"/></svg><div class="a" style="left:1369.2px;top:391.7px;width:4px;height:4px;border-radius:50%;background:#9a9a9a"></div><div class="a" style="left:1369.2px;top:397.5px;width:4px;height:4px;border-radius:50%;background:#9a9a9a"></div><div class="a" style="left:1369.2px;top:402.9px;width:4px;height:4px;border-radius:50%;background:#9a9a9a"></div><div class="a" style="left:734px;top:778.5px;width:51px;height:22.5px;background:#f7f7f7;border-radius:4px"></div><svg class="a" style="left:742px;top:785.5px" width="14" height="9" viewBox="0 0 14 9"><path d="M1 1h11.5M3.5 4.3h6.5M5.8 7.6h2" stroke="#555" stroke-width="1.5"/></svg><div class="a" style="left:762.5px;top:782.0px;width:15px;height:15px;border-radius:50%;background:#2aa8cc"></div><svg class="a" style="left:762.5px;top:782.0px" width="15" height="15" viewBox="0 0 15 15"><path d="M6.2 5.2L8.3 3.8V11.2" fill="none" stroke="#fff" stroke-width="1.8" stroke-linejoin="round"/></svg><div class="a" style="left:801.5px;top:781.7px;width:4px;height:4px;border-radius:50%;background:#9a9a9a"></div><div class="a" style="left:801.5px;top:787.5px;width:4px;height:4px;border-radius:50%;background:#9a9a9a"></div><div class="a" style="left:801.5px;top:792.9px;width:4px;height:4px;border-radius:50%;background:#9a9a9a"></div><div class="a" style="left:1302px;top:778.5px;width:51px;height:22.5px;background:#f7f7f7;border-radius:4px"></div><svg class="a" style="left:1310px;top:785.5px" width="14" height="9" viewBox="0 0 14 9"><path d="M1 1h11.5M3.5 4.3h6.5M5.8 7.6h2" stroke="#555" stroke-width="1.5"/></svg><div class="a" style="left:1330.5px;top:782.0px;width:15px;height:15px;border-radius:50%;background:#2aa8cc"></div><svg class="a" style="left:1330.5px;top:782.0px" width="15" height="15" viewBox="0 0 15 15"><path d="M6.2 5.2L8.3 3.8V11.2" fill="none" stroke="#fff" stroke-width="1.8" stroke-linejoin="round"/></svg><div class="a" style="left:1369.2px;top:781.7px;width:4px;height:4px;border-radius:50%;background:#9a9a9a"></div><div class="a" style="left:1369.2px;top:787.5px;width:4px;height:4px;border-radius:50%;background:#9a9a9a"></div><div class="a" style="left:1369.2px;top:792.9px;width:4px;height:4px;border-radius:50%;background:#9a9a9a"></div><div class="a" style="left:15.30px;top:13.60px;font-size:15.8px;line-height:15.8px;color:#55bde6;-webkit-text-stroke:0.6px #55bde6;letter-spacing:-0.300px;">BI</div><div class="a" style="left:32.90px;top:13.60px;font-size:15.8px;line-height:15.8px;color:#a9a9a9;-webkit-text-stroke:0.5px #a9a9a9;letter-spacing:0.800px;">Конструктор</div><div class="a" style="left:153.20px;top:16.30px;font-size:14px;line-height:14px;color:#555;letter-spacing:-0.044px;">Dashboards</div><div class="a" style="left:257.60px;top:16.30px;font-size:14px;line-height:14px;color:#555;letter-spacing:0.140px;">Charts</div><div class="a" style="left:329.50px;top:16.30px;font-size:14px;line-height:14px;color:#555;letter-spacing:-0.014px;">Datasets</div><div class="a" style="left:410.40px;top:16.30px;font-size:14px;line-height:14px;color:#555;letter-spacing:-1.250px;">SQL</div><div class="a" style="left:1278.60px;top:16.60px;font-size:14px;line-height:14px;color:#555;letter-spacing:0.300px;">Настройки</div><div class="a" style="left:14.60px;top:64.90px;font-size:15px;line-height:15px;color:#3d3d3d;-webkit-text-stroke:0.4px #3d3d3d;letter-spacing:1.133px;">Фильтры</div><div class="a" style="left:33.80px;top:103.90px;font-size:11.5px;line-height:11.5px;color:#3b8ea3;-webkit-text-stroke:0.4px #3b8ea3;letter-spacing:0.217px;">ДОБАВИТЬ/ИЗМЕНИТЬ ФИЛЬТРЫ</div><div class="a" style="left:14.20px;top:149.80px;font-size:11.5px;line-height:11.5px;color:#555;-webkit-text-stroke:0.4px #555;letter-spacing:0.545px;">Время звонка</div><div class="a" style="left:26.50px;top:178.90px;font-size:13.5px;line-height:13.5px;color:#555;letter-spacing:0.263px;">Last year</div><div class="a" style="left:14.20px;top:221.40px;font-size:11.5px;line-height:11.5px;color:#555;-webkit-text-stroke:0.4px #555;letter-spacing:0.943px;">Менеджер</div><div class="a" style="left:26.00px;top:250.00px;font-size:13.5px;line-height:13.5px;color:#bdbdbd;letter-spacing:0.189px;">2 варианта</div><div class="a" style="left:54.60px;top:734.10px;font-size:12px;line-height:12px;color:#767676;-webkit-text-stroke:0.4px #767676;letter-spacing:-0.238px;">ПРИМЕНИТЬ ФИЛЬТРЫ</div><div class="a" style="left:60.10px;top:773.80px;font-size:12px;line-height:12px;color:#767676;-webkit-text-stroke:0.4px #767676;letter-spacing:-0.253px;">СБРОСИТЬ ФИЛЬТРЫ</div><div class="a" style="left:259.40px;top:70.70px;font-size:19.5px;line-height:19.5px;color:#3a3a3a;-webkit-text-stroke:0.5px #3a3a3a;letter-spacing:0.900px;">Аналитика звонков 2</div><div class="a" style="left:509.10px;top:75.10px;font-size:11.5px;line-height:11.5px;color:#606060;letter-spacing:0.173px;">Опубликовано</div><div class="a" style="left:1190.70px;top:75.40px;font-size:11.5px;line-height:11.5px;color:#4a6f86;-webkit-text-stroke:0.4px #4a6f86;letter-spacing:0.295px;">РЕДАКТИРОВАТЬ ДАШБОРД</div><div class="a" style="left:289.20px;top:151.20px;font-size:15.3px;line-height:15.3px;color:#3d3d3d;-webkit-text-stroke:0.4px #3d3d3d;letter-spacing:0.714px;">Динамика продаж</div><div class="a" style="left:855.90px;top:152.00px;font-size:15.3px;line-height:15.3px;color:#3d3d3d;-webkit-text-stroke:0.4px #3d3d3d;letter-spacing:0.558px;">Распределение</div><div class="a" style="left:857.00px;top:175.20px;font-size:15.3px;line-height:15.3px;color:#3d3d3d;-webkit-text-stroke:0.4px #3d3d3d;letter-spacing:0.588px;">успешных сделок...</div><div class="a" style="left:1140.30px;top:152.00px;font-size:15.3px;line-height:15.3px;color:#3d3d3d;-webkit-text-stroke:0.4px #3d3d3d;letter-spacing:0.558px;">Распределение</div><div class="a" style="left:1140.30px;top:175.20px;font-size:15.3px;line-height:15.3px;color:#3d3d3d;-webkit-text-stroke:0.4px #3d3d3d;letter-spacing:0.471px;">неуспешных сдел...</div><div class="a" style="left:288.70px;top:392.40px;font-size:15.3px;line-height:15.3px;color:#3d3d3d;-webkit-text-stroke:0.4px #3d3d3d;letter-spacing:0.600px;">Динамика звонков, шт.</div><div class="a" style="left:857.50px;top:392.40px;font-size:15.3px;line-height:15.3px;color:#3d3d3d;-webkit-text-stroke:0.4px #3d3d3d;letter-spacing:0.498px;">Среднее кол-во звонков по дням недели, шт.</div><div class="a" style="left:289.20px;top:781.20px;font-size:15.3px;line-height:15.3px;color:#3d3d3d;-webkit-text-stroke:0.4px #3d3d3d;letter-spacing:0.570px;">Динамика неотвеченных звонков, шт.</div><div class="a" style="left:857.00px;top:781.00px;font-size:15.3px;line-height:15.3px;color:#3d3d3d;-webkit-text-stroke:0.4px #3d3d3d;letter-spacing:0.603px;">Статистика менеджеров по звонкам</div><div class="a" style="left:549.80px;top:183.60px;font-size:12.5px;line-height:12.5px;color:#636363;letter-spacing:-0.192px;">Выручка, руб.</div><div class="a" style="left:664.40px;top:183.60px;font-size:12.5px;line-height:12.5px;color:#636363;letter-spacing:0.018px;">Продажи, шт.</div><div class="a" style="left:342.10px;top:423.20px;font-size:12.5px;line-height:12.5px;color:#636363;letter-spacing:0.047px;">Количество звонков</div><div class="a" style="left:495.40px;top:423.20px;font-size:12.5px;line-height:12.5px;color:#636363;letter-spacing:-0.057px;">Входящие звонки</div><div class="a" style="left:633.40px;top:423.20px;font-size:12.5px;line-height:12.5px;color:#636363;letter-spacing:-0.053px;">Исходящие звонки</div><div class="a" style="left:860.80px;top:214.30px;font-size:11.8px;line-height:11.8px;color:#555;-webkit-text-stroke:0.3px #555;letter-spacing:0.400px;">Кол-во звонков,</div><div class="a" style="left:861.80px;top:229.70px;font-size:11.8px;line-height:11.8px;color:#555;-webkit-text-stroke:0.3px #555;">шт.</div><div class="a" style="left:1017.80px;top:214.30px;font-size:11.8px;line-height:11.8px;color:#555;-webkit-text-stroke:0.3px #555;letter-spacing:-0.360px;">%%Доля</div><div class="a" style="left:1024.30px;top:229.70px;font-size:11.8px;line-height:11.8px;color:#555;-webkit-text-stroke:0.3px #555;letter-spacing:0.340px;">сделок</div><div class="a" style="left:1144.80px;top:214.30px;font-size:11.8px;line-height:11.8px;color:#555;-webkit-text-stroke:0.3px #555;letter-spacing:0.400px;">Кол-во звонков,</div><div class="a" style="left:1145.80px;top:229.70px;font-size:11.8px;line-height:11.8px;color:#555;-webkit-text-stroke:0.3px #555;">шт.</div><div class="a" style="left:1301.80px;top:214.30px;font-size:11.8px;line-height:11.8px;color:#555;-webkit-text-stroke:0.3px #555;letter-spacing:-0.360px;">%%Доля</div><div class="a" style="left:1308.30px;top:229.70px;font-size:11.8px;line-height:11.8px;color:#555;-webkit-text-stroke:0.3px #555;letter-spacing:0.340px;">сделок</div><div class="a" style="left:982.80px;top:441.50px;font-size:11.6px;line-height:11.6px;color:#585858;letter-spacing:0.400px;">Мера</div><div class="a" style="left:1071.60px;top:441.50px;font-size:11.6px;line-height:11.6px;color:#585858;letter-spacing:0.329px;">Количество звонков</div><div class="a" style="left:983.80px;top:465.30px;font-size:11.6px;line-height:11.6px;color:#585858;letter-spacing:0.167px;">Тип звонка</div><div class="a" style="left:880.20px;top:489.80px;font-size:11.6px;line-height:11.6px;color:#585858;letter-spacing:0.220px;">День недели</div><div class="a" style="left:1071.60px;top:477.60px;font-size:11.6px;line-height:11.6px;color:#585858;letter-spacing:0.286px;">Входящие</div><div class="a" style="left:1156.00px;top:477.60px;font-size:11.6px;line-height:11.6px;color:#585858;letter-spacing:0.425px;">Исходящие</div><div class="a" style="left:1250.10px;top:477.60px;font-size:11.6px;line-height:11.6px;color:#585858;letter-spacing:0.273px;">Неотвеченные</div><div class="a" style="left:879.60px;top:513.80px;font-size:11.6px;line-height:11.6px;color:#585858;">1. Понедельник</div><div class="a" style="left:879.60px;top:537.80px;font-size:11.6px;line-height:11.6px;color:#585858;">2. Вторник</div><div class="a" style="left:879.60px;top:561.80px;font-size:11.6px;line-height:11.6px;color:#585858;">3. Среда</div><div class="a" style="left:880.60px;top:585.80px;font-size:11.6px;line-height:11.6px;color:#585858;">4. Четверг</div><div class="a" style="left:879.60px;top:609.80px;font-size:11.6px;line-height:11.6px;color:#585858;">5. Пятница</div><div class="a" style="left:879.60px;top:633.80px;font-size:11.6px;line-height:11.6px;color:#585858;">6. Суббота</div><div class="a" style="left:879.60px;top:657.80px;font-size:11.6px;line-height:11.6px;color:#585858;">7. Воскресенье</div><div class="a" style="left:1425px;top:0;width:15px;height:807px;background:#f1f1f1"><svg width="15" height="807" style="position:absolute;left:0;top:0"><path d="M3.5 10L7 6.2 10.5 10z" fill="#a3a3a3"/><rect x="1.2" y="15" width="11.5" height="580" fill="#c8c8c8"/><rect x="11" y="179" width="3.3" height="450" fill="#5b8ac6"/><path d="M4 797.5L7.1 801.2 10.5 797.5z" fill="#505050"/><rect x="14" y="0" width="1" height="807" fill="#dadada"/></svg></div><div class="a" style="left:0;top:0;width:1440px;height:807px;border-top:1px solid #d2d2d2;border-left:1px solid #d2d2d2;border-bottom:1px solid #d2d2d2"></div></body></html>
